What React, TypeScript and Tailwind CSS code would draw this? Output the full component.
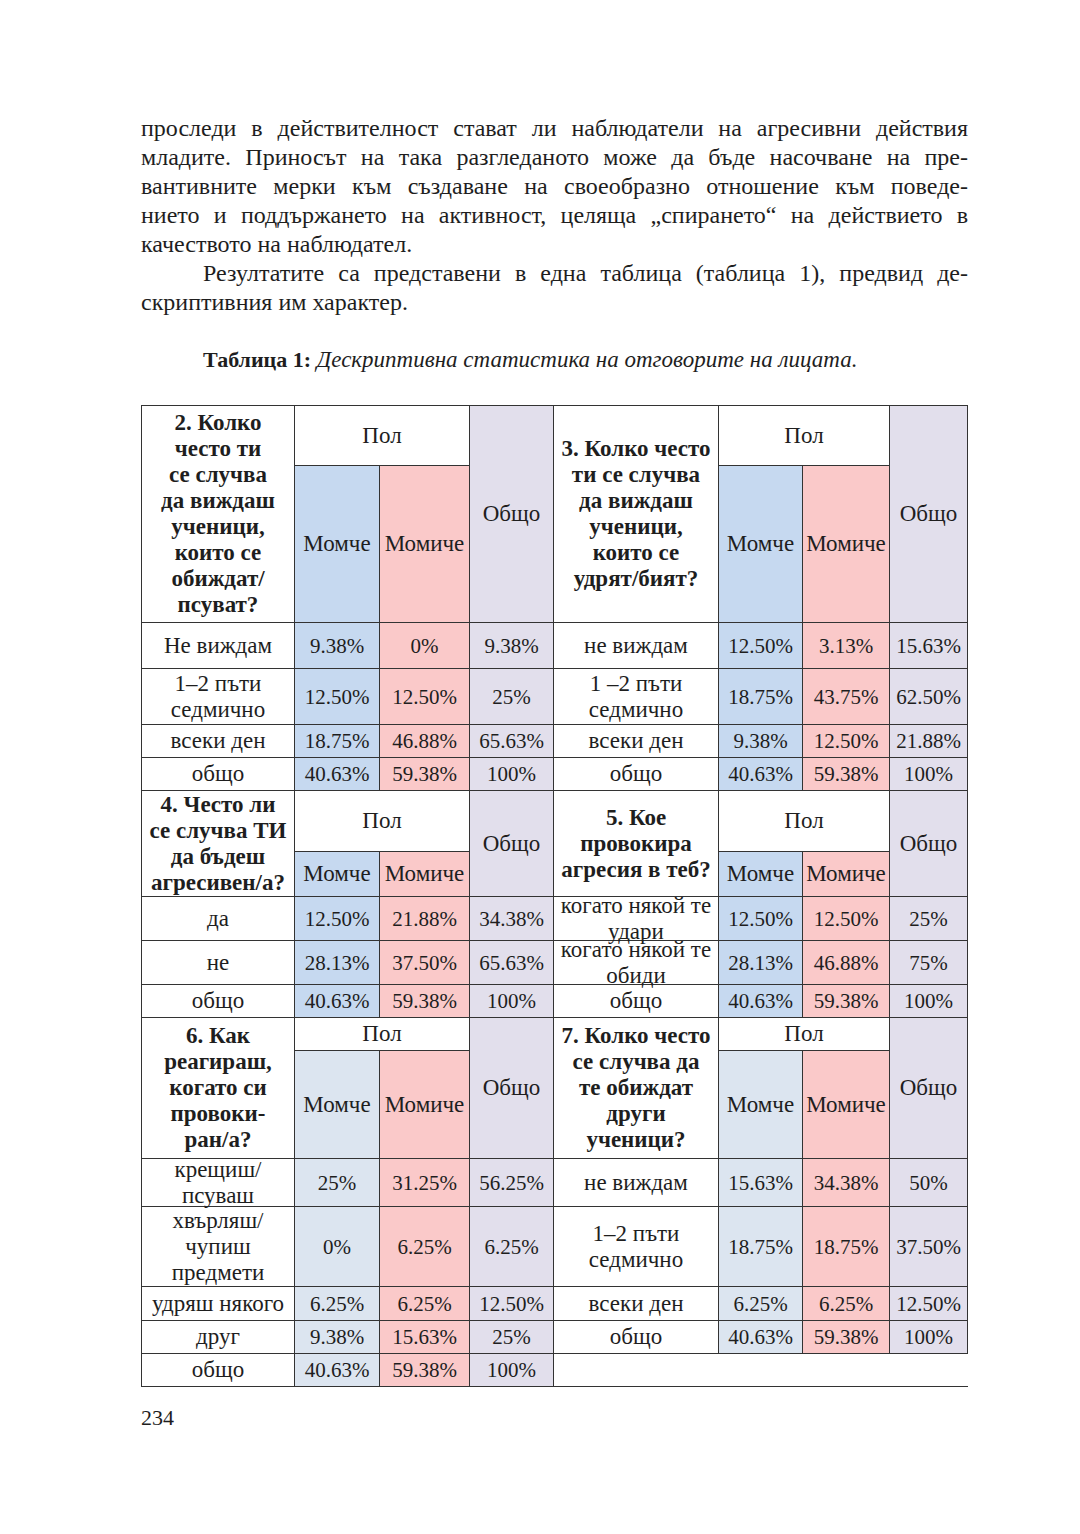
import React from "react";

const BL = "bg-[#c6d9f0]";
const BL2 = "bg-[#dce5f0]";
const PK = "bg-[#fac9c9]";
const LV = "bg-[#e2dfec]";

function C({ children, className = "" }: { children?: React.ReactNode; className?: string }) {
  return (
    <div
      className={
        "flex items-center justify-center text-center border-r border-b border-[#333] leading-[26px] whitespace-nowrap " +
        className
      }
    >
      <div>{children}</div>
    </div>
  );
}

function W({ children }: { children: React.ReactNode }) {
  return <span className="text-[23px]">{children}</span>;
}

function Q({ lines }: { lines: string[] }) {
  return (
    <>
      {lines.map((l, i) => (
        <div key={i} className="font-bold text-[23px]">
          {l}
        </div>
      ))}
    </>
  );
}

function ML({ lines }: { lines: string[] }) {
  return (
    <>
      {lines.map((l, i) => (
        <div key={i} className="text-[23px]">
          {l}
        </div>
      ))}
    </>
  );
}

type Cell = React.ReactNode;
type Row = [Cell, string, string, string, Cell?, string?, string?, string?];

function Lbl({ v }: { v: Cell }) {
  return typeof v === "string" ? <W>{v}</W> : <>{v}</>;
}

function DataRow({ r, blue }: { r: Row; blue: string }) {
  const hasRight = r[4] !== undefined;
  return (
    <>
      <C>
        <Lbl v={r[0]} />
      </C>
      <C className={blue}>{r[1]}</C>
      <C className={PK}>{r[2]}</C>
      <C className={LV}>{r[3]}</C>
      {hasRight ? (
        <>
          <C>
            <Lbl v={r[4]} />
          </C>
          <C className={blue}>{r[5]}</C>
          <C className={PK}>{r[6]}</C>
          <C className={LV}>{r[7]}</C>
        </>
      ) : (
        <div className="col-span-4 border-b border-[#333]" />
      )}
    </>
  );
}

function Header({ q1, q2, blue }: { q1: string[]; q2: string[]; blue: string }) {
  return (
    <>
      <C className="row-span-2">
        <Q lines={q1} />
      </C>
      <C className="col-span-2">
        <W>Пол</W>
      </C>
      <C className={"row-span-2 " + LV}>
        <W>Общо</W>
      </C>
      <C className="row-span-2">
        <Q lines={q2} />
      </C>
      <C className="col-span-2">
        <W>Пол</W>
      </C>
      <C className={"row-span-2 " + LV}>
        <W>Общо</W>
      </C>
      <C className={blue}>
        <W>Момче</W>
      </C>
      <C className={PK}>
        <W>Момиче</W>
      </C>
      <C className={blue}>
        <W>Момче</W>
      </C>
      <C className={PK}>
        <W>Момиче</W>
      </C>
    </>
  );
}

const COLS = "grid-cols-[153px_85px_90px_84px_165px_84px_87px_78px]";

function JLine({ children, indent = false }: { children: React.ReactNode; indent?: boolean }) {
  return (
    <div className={"text-justify [text-align-last:justify] " + (indent ? "pl-[62px]" : "")}>{children}</div>
  );
}

export default function App() {
  return (
    <div className="w-[1080px] h-[1534px] bg-white text-[#1e1e1e] font-['Liberation_Serif',serif]">
      <div className="pl-[141px] w-[968px] pt-[114px]">
        <div className="text-[24px] leading-[29px]">
          <JLine>проследи в действителност стават ли наблюдатели на агресивни действия</JLine>
          <JLine>младите. Приносът на така разгледаното може да бъде насочване на пре-</JLine>
          <JLine>вантивните мерки към създаване на своеобразно отношение към поведе-</JLine>
          <JLine>нието и поддържането на активност, целяща „спирането“ на действието в</JLine>
          <div>качеството на наблюдател.</div>
          <JLine indent>Резултатите са представени в една таблица (таблица 1), предвид де-</JLine>
          <div>скриптивния им характер.</div>
        </div>

        <div className="mt-[29px] pl-[62px] text-[22px] leading-[28px]">
          <span className="font-bold">Таблица 1:</span>{" "}
          <span className="italic text-[23px]">Дескриптивна статистика на отговорите на лицата.</span>
        </div>

        <div className="mt-[31px] w-[827px] text-[21px] border-l border-t border-[#333]">
          <div className={"grid " + COLS + " grid-rows-[60px_157px_46px_56px_33px_33px]"}>
            <Header
              blue={BL}
              q1={["2. Колко", "често ти", "се случва", "да виждаш", "ученици,", "които се", "обиждат/", "псуват?"]}
              q2={["3. Колко често", "ти се случва", "да виждаш", "ученици,", "които се", "удрят/бият?"]}
            />
            <DataRow blue={BL} r={["Не виждам", "9.38%", "0%", "9.38%", "не виждам", "12.50%", "3.13%", "15.63%"]} />
            <DataRow
              blue={BL}
              r={[
                <ML lines={["1–2 пъти", "седмично"]} />,
                "12.50%",
                "12.50%",
                "25%",
                <ML lines={["1 –2 пъти", "седмично"]} />,
                "18.75%",
                "43.75%",
                "62.50%",
              ]}
            />
            <DataRow blue={BL} r={["всеки ден", "18.75%", "46.88%", "65.63%", "всеки ден", "9.38%", "12.50%", "21.88%"]} />
            <DataRow blue={BL} r={["общо", "40.63%", "59.38%", "100%", "общо", "40.63%", "59.38%", "100%"]} />
          </div>

          <div className={"grid " + COLS + " grid-rows-[61px_45px_44px_44px_33px]"}>
            <Header
              blue={BL}
              q1={["4. Често ли", "се случва ТИ", "да бъдеш", "агресивен/а?"]}
              q2={["5. Кое", "провокира", "агресия в теб?"]}
            />
            <DataRow
              blue={BL}
              r={["да", "12.50%", "21.88%", "34.38%", <ML lines={["когато някой те", "удари"]} />, "12.50%", "12.50%", "25%"]}
            />
            <DataRow
              blue={BL}
              r={["не", "28.13%", "37.50%", "65.63%", <ML lines={["когато някой те", "обиди"]} />, "28.13%", "46.88%", "75%"]}
            />
            <DataRow blue={BL} r={["общо", "40.63%", "59.38%", "100%", "общо", "40.63%", "59.38%", "100%"]} />
          </div>

          <div className={"grid " + COLS + " grid-rows-[33px_108px_48px_80px_34px_33px_33px]"}>
            <Header
              blue={BL2}
              q1={["6. Как", "реагираш,", "когато си", "провоки-", "ран/а?"]}
              q2={["7. Колко често", "се случва да", "те обиждат", "други", "ученици?"]}
            />
            <DataRow
              blue={BL2}
              r={[<ML lines={["крещиш/", "псуваш"]} />, "25%", "31.25%", "56.25%", "не виждам", "15.63%", "34.38%", "50%"]}
            />
            <DataRow
              blue={BL2}
              r={[
                <ML lines={["хвърляш/", "чупиш", "предмети"]} />,
                "0%",
                "6.25%",
                "6.25%",
                <ML lines={["1–2 пъти", "седмично"]} />,
                "18.75%",
                "18.75%",
                "37.50%",
              ]}
            />
            <DataRow blue={BL2} r={["удряш някого", "6.25%", "6.25%", "12.50%", "всеки ден", "6.25%", "6.25%", "12.50%"]} />
            <DataRow blue={BL2} r={["друг", "9.38%", "15.63%", "25%", "общо", "40.63%", "59.38%", "100%"]} />
            <DataRow blue={BL2} r={["общо", "40.63%", "59.38%", "100%"]} />
          </div>
        </div>

        <div className="mt-[17px] text-[22px] leading-[28px]">234</div>
      </div>
    </div>
  );
}
